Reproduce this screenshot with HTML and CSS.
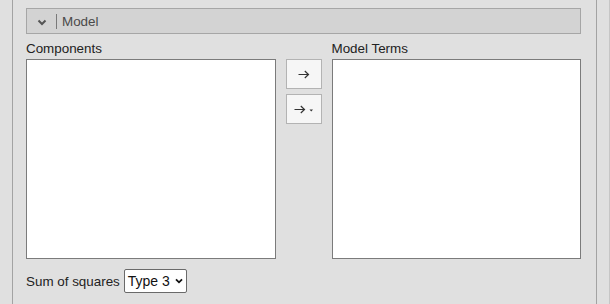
FILE: index.html
```html
<!DOCTYPE html>
<html lang="en">
<head>
    <meta charset="UTF-8">
    <title>Model</title>
    <link rel="stylesheet" href="styles.css">
</head>
<body>
    <div class="frame">
        <div class="panel">
            <!-- Collapsible section header -->
            <div class="section-header">
                <svg class="chevron" width="10" height="7" viewBox="0 0 10 7">
                    <path d="M1.5 1.5 L5 5 L8.5 1.5" fill="none" stroke="#555" stroke-width="2"/>
                </svg>
                <span class="divider"></span>
                <span class="section-title">Model</span>
            </div>

            <!-- Variable assignment -->
            <div class="assign">
                <div class="column">
                    <div class="label">Components</div>
                    <div class="listbox"></div>
                </div>
                <div class="buttons">
                    <button class="move-btn">
                        <svg width="12" height="9" viewBox="0 0 12 9">
                            <path d="M0.5 4.5 H10.5 M6.8 1 L10.5 4.5 L6.8 8" fill="none" stroke="#333" stroke-width="1.2"/>
                        </svg>
                    </button>
                    <button class="move-btn">
                        <svg width="20" height="9" viewBox="0 0 20 9">
                            <path d="M0.5 4.5 H10.5 M6.8 1 L10.5 4.5 L6.8 8" fill="none" stroke="#333" stroke-width="1.2"/>
                            <path d="M15.5 4.5 H19 L17.25 6.5 Z" fill="#333"/>
                        </svg>
                    </button>
                </div>
                <div class="column">
                    <div class="label">Model Terms</div>
                    <div class="listbox"></div>
                </div>
            </div>

            <div class="option-row">
                <span class="option-label">Sum of squares</span>
                <div class="dropdown">
                    <span>Type 3</span>
                    <svg width="8" height="6" viewBox="0 0 8 6">
                        <path d="M1 1.3 L4 4.3 L7 1.3" fill="none" stroke="#111" stroke-width="1.8"/>
                    </svg>
                </div>
            </div>
        </div>
    </div>
</body>
</html>
```

FILE: styles.css
```css
body {
    margin: 0;
    background-color: #e0e0e0;
    font-family: "Liberation Sans", Arial, sans-serif;
    font-size: 13.4px;
    color: #222222;
}

.frame {
    width: 609px;
    height: 304px;
    border-right: 1px solid #c6c6c6;
    overflow: hidden;
}

.panel {
    margin-left: 12px;
    width: 555px;
    height: 304px;
    padding: 8px 15px 0 13px;
    border-left: 1px solid #a3a3a3;
    border-right: 1px solid #a3a3a3;
}

.section-header {
    display: flex;
    align-items: center;
    height: 24px;
    background-color: #d3d3d3;
    border: 1px solid #a6a6a6;
}

.chevron {
    margin-left: 10px;
    margin-top: 2px;
}

.divider {
    width: 1px;
    height: 15px;
    margin-left: 9px;
    background-color: #7a7a7a;
}

.section-title {
    margin-left: 5px;
    color: #4a4a4a;
}

.assign {
    display: grid;
    grid-template-columns: 1fr 36px 1fr;
    column-gap: 10px;
    margin-top: 6px;
}

.label {
    line-height: 17px;
    margin-bottom: 2px;
}

.listbox {
    height: 198px;
    background-color: #ffffff;
    border: 1px solid #7b7b7b;
}

.buttons {
    display: flex;
    flex-direction: column;
    gap: 5px;
    padding-top: 19px;
}

.move-btn {
    display: flex;
    align-items: center;
    justify-content: center;
    width: 36px;
    height: 30px;
    padding: 0;
    background-color: #f6f6f6;
    border: 1px solid #b3b3b3;
}

.option-row {
    display: flex;
    align-items: center;
    gap: 4px;
    margin-top: 10px;
}

.dropdown {
    display: flex;
    align-items: center;
    gap: 5px;
    height: 22px;
    padding: 0 3px 0 3px;
    background-color: #ffffff;
    border: 1px solid #6a6a6a;
    border-radius: 2px;
    color: #111111;
    font-size: 14px;
}
```
